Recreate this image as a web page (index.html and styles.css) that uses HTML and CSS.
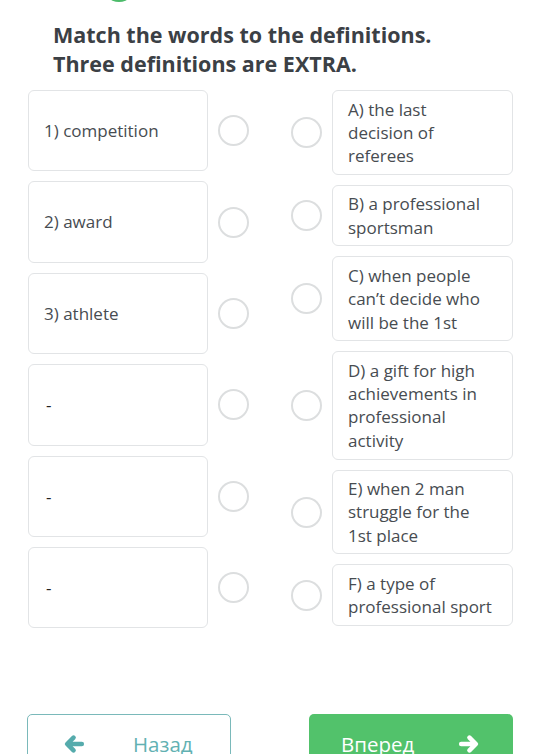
FILE: index.html
```html
<!DOCTYPE html>
<html>
<head>
<meta charset="utf-8">
<link rel="stylesheet" href="styles.css">
</head>
<body>
<div class="page">
  <div class="top-dot"></div>
  <h1 class="title">Match the words to the definitions.<br>Three definitions are EXTRA.</h1>
  <div class="match">
    <div class="col left">
      <div class="row"><div class="card word">1) competition</div><span class="dot"></span></div>
      <div class="row"><div class="card word">2) award</div><span class="dot"></span></div>
      <div class="row"><div class="card word">3) athlete</div><span class="dot"></span></div>
      <div class="row"><div class="card word dash">-</div><span class="dot"></span></div>
      <div class="row"><div class="card word dash">-</div><span class="dot"></span></div>
      <div class="row"><div class="card word dash">-</div><span class="dot"></span></div>
    </div>
    <div class="col right">
      <div class="row"><span class="dot"></span><div class="card def">A) the last decision of referees</div></div>
      <div class="row"><span class="dot"></span><div class="card def">B) a professional sportsman</div></div>
      <div class="row"><span class="dot"></span><div class="card def">C) when people can’t decide who will be the 1st</div></div>
      <div class="row"><span class="dot"></span><div class="card def">D) a gift for high achievements in professional activity</div></div>
      <div class="row"><span class="dot"></span><div class="card def">E) when 2 man struggle for the 1st place</div></div>
      <div class="row"><span class="dot"></span><div class="card def">F) a type of professional sport</div></div>
    </div>
  </div>
  <div class="nav">
    <button class="btn back">
      <svg class="arrow" viewBox="0 0 24 24" width="22" height="22"><path d="M20.5 12H5.5M11.5 5L4.5 12l7 7" fill="none" stroke="currentColor" stroke-width="5" stroke-linecap="round" stroke-linejoin="round"/></svg>
      <span>Назад</span>
    </button>
    <button class="btn next">
      <span>Вперед</span>
      <svg class="arrow" viewBox="0 0 24 24" width="22" height="22"><path d="M3.5 12h15M12.5 5l7 7-7 7" fill="none" stroke="currentColor" stroke-width="5" stroke-linecap="round" stroke-linejoin="round"/></svg>
    </button>
  </div>
</div>
</body>
</html>
```
FILE: styles.css
```css
* { box-sizing: border-box; }
html, body { margin: 0; padding: 0; background: #fff; }
body {
  font-family: "Open Sans", "Noto Sans", sans-serif;
  color: #444a4f;
  overflow: hidden;
}
.page {
  width: 536px;
  height: 754px;
  position: relative;
  overflow: hidden;
}
.top-dot {
  width: 34px;
  height: 34px;
  border-radius: 50%;
  background: #4cbb6a;
  margin: -32px 0 0 102px;
}
.title {
  margin: 18px 0 0 53px;
  font-size: 21.5px;
  line-height: 29px;
  font-weight: 700;
  color: #3b4045;
}
.match {
  display: flex;
  gap: 42px;
  margin: 12px 0 0 28px;
  align-items: flex-start;
}
.col {
  display: flex;
  flex-direction: column;
  gap: 10px;
}
.row {
  display: flex;
  align-items: center;
  gap: 10px;
}
.card {
  border: 1px solid #e2e4e6;
  border-radius: 6px;
  background: #fff;
  font-size: 17px;
  line-height: 23.3px;
  color: #474c51;
}
.word {
  width: 180px;
  height: 81.4px;
  display: flex;
  align-items: center;
  padding: 0 15px;
}
.dash { color: #222; padding-left: 17px; }
.def {
  width: 181px;
  padding: 6.5px 16px 6.5px 15px;
}
.dot {
  flex: none;
  width: 31px;
  height: 31px;
  border: 2px solid #dcdedf;
  border-radius: 50%;
}
.nav {
  display: flex;
  justify-content: space-between;
  margin: 86px 23px 0 27px;
}
.btn {
  width: 204px;
  height: 60px;
  border-radius: 5px;
  font-family: "Open Sans", "Noto Sans", sans-serif;
  font-size: 20.5px;
  display: flex;
  align-items: center;
  padding: 0;
  cursor: pointer;
}
.back {
  background: #fff;
  border: 1px solid #7ab9ba;
  color: #62b1b2;
  padding-left: 35px;
  gap: 48px;
}
.back .arrow { color: #55abac; }
.next {
  background: #52c26b;
  border: none;
  color: #fff;
  padding-left: 32px;
  gap: 44px;
}
```
